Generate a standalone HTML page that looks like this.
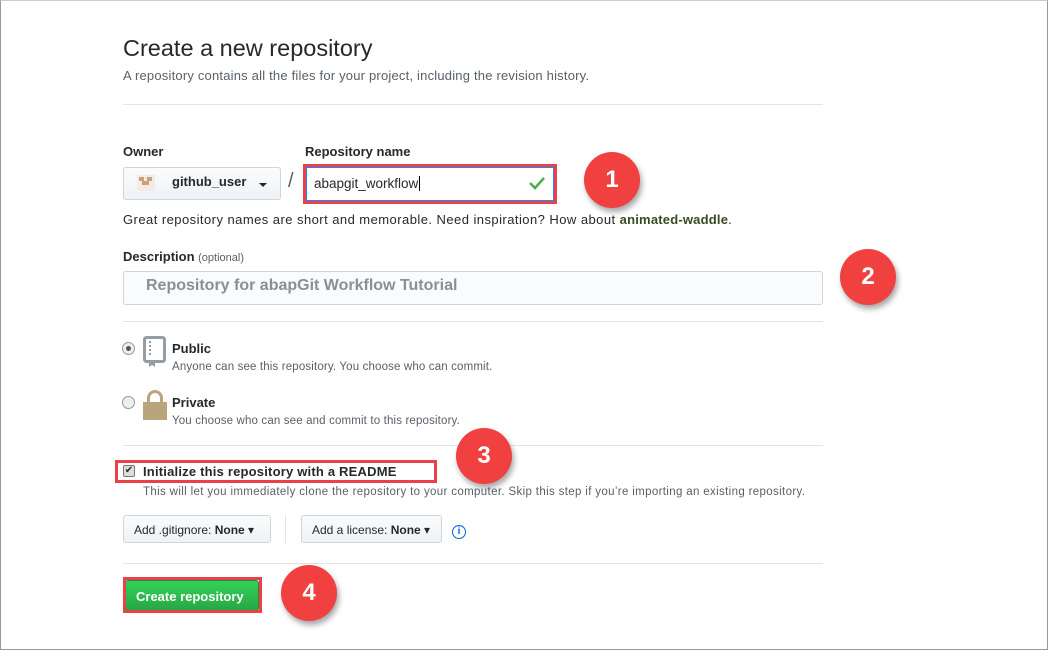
<!DOCTYPE html>
<html><head><meta charset="utf-8"><style>
*{box-sizing:border-box}
body{margin:0;width:1048px;height:650px;background:#fff;font-family:"Liberation Sans",Arial,sans-serif;color:#24292e;position:relative;overflow:hidden}
.frame{position:absolute;left:0;top:0;width:1048px;height:650px;border:1px solid #999;border-top-color:#ccc}
.a{position:absolute;white-space:nowrap}
.hr{position:absolute;left:123px;width:700px;height:1px;background:#e1e4e8}
.btn{position:absolute;border:1px solid #d1d5da;border-radius:3px;background:linear-gradient(#fafbfc,#eff3f6);font-size:12px;color:#24292e}
.circ{position:absolute;width:56px;height:56px;border-radius:50%;background:#f04040;color:#fff;font-weight:bold;font-size:24px;text-align:center;line-height:56px;box-shadow:2px 4px 6px rgba(0,0,0,.35)}
.redbox{position:absolute;border:3px solid #e8414a}
.small{font-size:11.5px;color:#586069;letter-spacing:0.15px}
</style></head><body>
<div class="frame"></div>
<div class="a" style="left:123px;top:35px;font-size:23.5px;color:#24292e">Create a new repository</div>
<div class="a" style="left:123px;top:68px;font-size:13px;color:#586069;letter-spacing:0.2px">A repository contains all the files for your project, including the revision history.</div>
<div class="hr" style="top:104px"></div>
<div class="a" style="left:123px;top:144px;font-size:13px;font-weight:bold">Owner</div>
<div class="a" style="left:305px;top:144px;font-size:13px;font-weight:bold">Repository name</div>
<div class="btn" style="left:123px;top:167px;width:158px;height:33px"></div>
<div class="a" style="left:137px;top:175px;width:18px;height:16px;background:#f3ece6"><div style="position:absolute;left:2px;top:2px;width:5px;height:4px;background:#c8a07a"></div><div style="position:absolute;left:10px;top:2px;width:5px;height:4px;background:#c8a07a"></div><div style="position:absolute;left:5px;top:6px;width:7px;height:4px;background:#c8a07a"></div></div>
<div class="a" style="left:172px;top:174px;font-size:13px;font-weight:bold">github_user</div>
<div class="a" style="left:259px;top:183px;border:4px solid transparent;border-top-color:#24292e;border-bottom:0"></div>
<div class="a" style="left:288px;top:170px;font-size:20px;color:#586069">/</div>
<div class="a" style="left:306px;top:167px;width:248px;height:34px;border:1px solid #2188ff;background:#fff"></div>
<div class="redbox" style="left:303px;top:164px;width:254px;height:40px"></div>
<div class="a" style="left:314px;top:176px;font-size:13.5px">abapgit_workflow<span style="border-left:1px solid #000;margin-left:1px"></span></div>
<svg class="a" style="left:528px;top:176px" width="18" height="14"><path d="M2 7 L7 12 L16 2" stroke="#4cae4c" stroke-width="2.5" fill="none"/></svg>
<div class="circ" style="left:584px;top:152px">1</div>
<div class="a" style="left:123px;top:212px;font-size:13px;color:#24292e;letter-spacing:0.45px">Great repository names are short and memorable. Need inspiration? How about <b style="color:#3a4a1f;letter-spacing:0.2px">animated-waddle</b>.</div>
<div class="a" style="left:123px;top:249px;font-size:13px;font-weight:bold">Description <span style="font-weight:normal;font-size:11px;color:#586069">(optional)</span></div>
<div class="a" style="left:123px;top:271px;width:700px;height:34px;border:1px solid #d1d5da;border-radius:3px;background:#fafbfc"></div>
<div class="a" style="left:146px;top:277px;font-size:16px;font-weight:bold;color:#8a8f95">Repository for abapGit Workflow Tutorial</div>
<div class="circ" style="left:840px;top:249px">2</div>
<div class="hr" style="top:321px"></div>
<div class="a" style="left:122px;top:342px;width:13px;height:13px;border:1px solid #999;border-radius:50%;background:#eee"><div style="position:absolute;left:3px;top:3px;width:5px;height:5px;border-radius:50%;background:#555"></div></div>
<svg class="a" style="left:143px;top:336px" width="24" height="32"><rect x="1.5" y="1.5" width="20" height="24" rx="2" fill="none" stroke="#959da5" stroke-width="3"/><path d="M7 5v2M7 9v2M7 13v2M7 17v2" stroke="#959da5" stroke-width="2"/><path d="M6 25v6l3-2 3 2v-6z" fill="#959da5"/></svg>
<div class="a" style="left:172px;top:341px;font-size:13px;font-weight:bold">Public</div>
<div class="a small" style="left:172px;top:361px">Anyone can see this repository. You choose who can commit.</div>
<div class="a" style="left:122px;top:396px;width:13px;height:13px;border:1px solid #999;border-radius:50%;background:#eee"></div>
<div class="a" style="left:147px;top:390px;width:16px;height:14px;border:3px solid #b9a57c;border-bottom:0;border-radius:8px 8px 0 0"></div>
<div class="a" style="left:143px;top:402px;width:24px;height:18px;background:#b9a57c"></div>
<div class="a" style="left:172px;top:395px;font-size:13px;font-weight:bold">Private</div>
<div class="a small" style="left:172px;top:415px">You choose who can see and commit to this repository.</div>
<div class="hr" style="top:445px"></div>
<div class="redbox" style="left:115px;top:460px;width:322px;height:23px"></div>
<div class="a" style="left:123px;top:465px;width:12px;height:12px;border:1px solid #777;border-radius:2px;background:#ddd;font-size:10px;line-height:10px;text-align:center">✔</div>
<div class="a" style="left:143px;top:464px;font-size:13px;font-weight:bold;letter-spacing:0.2px">Initialize this repository with a README</div>
<div class="a small" style="left:143px;top:486px;letter-spacing:0.35px">This will let you immediately clone the repository to your computer. Skip this step if you’re importing an existing repository.</div>
<div class="circ" style="left:456px;top:428px">3</div>
<div class="btn" style="left:123px;top:515px;width:148px;height:28px"></div>
<div class="a" style="left:134px;top:523px;font-size:12px;color:#24292e">Add .gitignore: <b>None</b> ▾</div>
<div class="a" style="left:285px;top:515px;width:1px;height:28px;background:#e1e4e8"></div>
<div class="btn" style="left:301px;top:515px;width:141px;height:28px"></div>
<div class="a" style="left:312px;top:523px;font-size:12px;color:#24292e">Add a license: <b>None</b> ▾</div>
<div class="a" style="left:452px;top:525px;width:14px;height:14px;border:1.5px solid #0366d6;border-radius:50%;color:#0366d6;font-size:10px;font-weight:bold;text-align:center;line-height:11px">i</div>
<div class="hr" style="top:563px"></div>
<div class="a" style="left:125px;top:580px;width:134px;height:31px;background:linear-gradient(#34d058,#28a745);border:1px solid #1e8b3a;border-radius:3px"></div>
<div class="redbox" style="left:123px;top:577px;width:139px;height:36px"></div>
<div class="a" style="left:136px;top:589px;font-size:13px;font-weight:bold;color:#fff">Create repository</div>
<div class="circ" style="left:281px;top:565px">4</div>
</body></html>
